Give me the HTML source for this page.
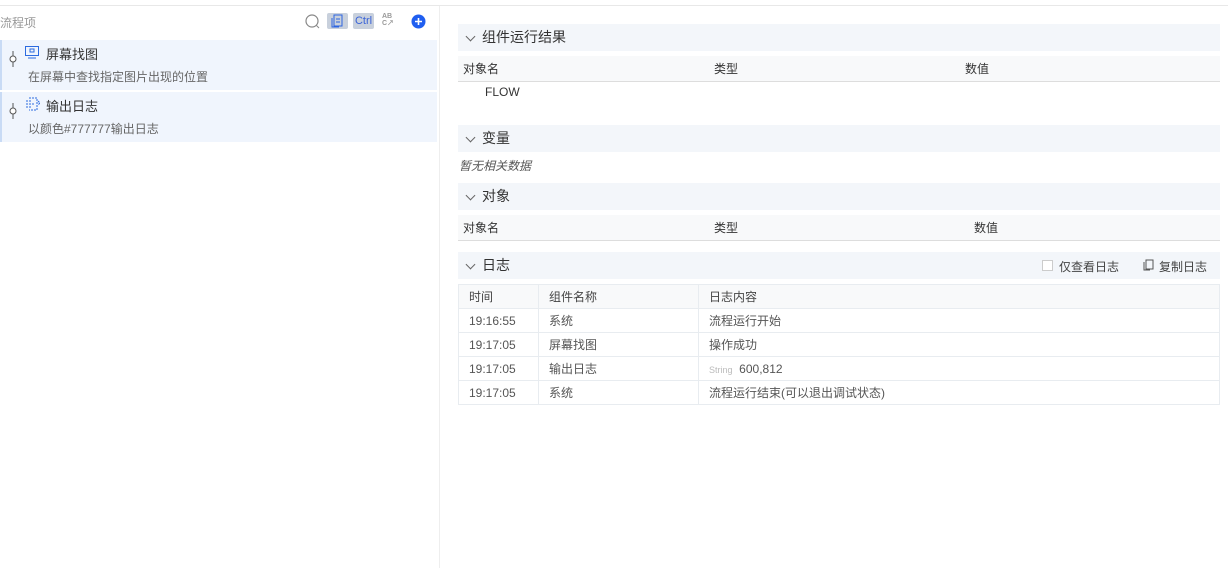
<!DOCTYPE html><html><head><meta charset="utf-8"><style>
*{margin:0;padding:0;box-sizing:border-box}
body{width:1228px;height:568px;background:#fff;font-family:"Liberation Sans","Noto Sans CJK SC",sans-serif;font-size:12px;color:#333;position:relative;overflow:hidden}
.a{position:absolute}
.band{position:absolute;left:458px;width:762px;height:27px;background:#f3f6fa;font-size:14px;color:#333;line-height:27px;padding-left:24px}
.band:before{content:"";position:absolute;left:9px;top:9px;width:6px;height:6px;border-right:1px solid #666;border-bottom:1px solid #666;transform:rotate(45deg)}
.th{position:absolute;left:458px;width:762px;height:26px;background:#f8f9fa;border-bottom:1px solid #ddd;line-height:26px;font-size:12px;color:#333}
.th span{position:absolute}
table{position:absolute;left:458px;top:284px;width:762px;border-collapse:collapse;font-size:12px;color:#555}
td{border:1px solid #e8ecf0;height:24px;padding-left:10px}
tr:first-child td{background:#f8f9fa;color:#444}
.item{position:absolute;left:0;width:437px;height:50px;background:#f0f5fd;border-left:2px solid #c9dbf5}
</style></head><body>
<div class="a" style="left:0;top:5px;width:1228px;height:1px;background:#e8e8e8"></div>
<div class="a" style="left:439px;top:6px;width:1px;height:562px;background:#eee"></div>
<div class="a" style="left:0;top:14px;color:#999;font-size:12px">流程项</div>
<svg class="a" style="left:305px;top:14px" width="15" height="15"><circle cx="7" cy="7" r="6" fill="none" stroke="#888" stroke-width="1.2"/><line x1="11" y1="11" x2="14" y2="14" stroke="#888"/></svg>
<div class="a" style="left:327px;top:13px;width:21px;height:16px;background:#c8d0dc;border-radius:2px"></div>
<svg class="a" style="left:331px;top:14px" width="13" height="14"><rect x="3" y="1" width="8" height="11" fill="none" stroke="#2c64e0"/><path d="M1 4v9h7M5 5h4M5 8h4" fill="none" stroke="#2c64e0"/></svg>
<div class="a" style="left:353px;top:13px;width:21px;height:16px;background:#c8d0dc;border-radius:2px;color:#3a63d8;font-size:11px;line-height:16px;text-align:center">Ctrl</div>
<div class="a" style="left:382px;top:13px;font-size:7px;color:#999;line-height:7px;font-weight:bold">AB<br>C↗</div>
<svg class="a" style="left:411px;top:14px" width="15" height="15"><circle cx="7.5" cy="7.5" r="7" fill="#1f5ef0"/><path d="M7.5 4v7M4 7.5h7" stroke="#fff" stroke-width="1.6"/></svg>
<div class="item" style="top:40px"></div>
<div class="item" style="top:92px"></div>
<svg class="a" style="left:8px;top:51px" width="10" height="16"><line x1="5" y1="0" x2="5" y2="16" stroke="#555"/><circle cx="5" cy="8" r="3" fill="#fff" stroke="#555"/></svg>
<svg class="a" style="left:8px;top:103px" width="10" height="16"><line x1="5" y1="0" x2="5" y2="16" stroke="#555"/><circle cx="5" cy="8" r="3" fill="#fff" stroke="#555"/></svg>
<svg class="a" style="left:25px;top:46px" width="14" height="13"><rect x="0.5" y="0.5" width="13" height="9" fill="none" stroke="#2c6be0"/><rect x="5" y="3" width="4" height="3" fill="none" stroke="#2c6be0"/><line x1="3" y1="12" x2="11" y2="12" stroke="#2c6be0"/></svg>
<div class="a" style="left:46px;top:44px;font-size:13px;color:#333">屏幕找图</div>
<div class="a" style="left:28px;top:68px;color:#666">在屏幕中查找指定图片出现的位置</div>
<svg class="a" style="left:25px;top:97px" width="15" height="14"><path d="M4 1h8v12H4M1 4h5M1 7h8M1 10h5M13 4l2 2-2 2" fill="none" stroke="#2c6be0" stroke-dasharray="2 1"/></svg>
<div class="a" style="left:46px;top:96px;font-size:13px;color:#333">输出日志</div>
<div class="a" style="left:28px;top:120px;color:#666">以颜色#777777输出日志</div>

<div class="band" style="top:24px">组件运行结果</div>
<div class="th" style="top:56px"><span style="left:5px">对象名</span><span style="left:256px">类型</span><span style="left:507px">数值</span></div>
<div class="a" style="left:485px;top:85px;color:#333">FLOW</div>
<div class="band" style="top:125px">变量</div>
<div class="a" style="left:459px;top:157px;color:#555;font-style:italic">暂无相关数据</div>
<div class="band" style="top:183px">对象</div>
<div class="th" style="top:215px"><span style="left:5px">对象名</span><span style="left:256px">类型</span><span style="left:516px">数值</span></div>
<div class="band" style="top:252px">日志</div>
<div class="a" style="left:1042px;top:260px;width:11px;height:11px;border:1px solid #ccc;background:#fff"></div>
<div class="a" style="left:1059px;top:258px;color:#444">仅查看日志</div>
<svg class="a" style="left:1143px;top:259px" width="11" height="12"><rect x="3" y="1" width="7" height="9" fill="none" stroke="#555"/><path d="M1 3v8h6" fill="none" stroke="#555"/></svg>
<div class="a" style="left:1159px;top:258px;color:#444">复制日志</div>
<table>
<tr><td style="width:80px">时间</td><td style="width:160px">组件名称</td><td>日志内容</td></tr>
<tr><td>19:16:55</td><td>系统</td><td>流程运行开始</td></tr>
<tr><td>19:17:05</td><td>屏幕找图</td><td>操作成功</td></tr>
<tr><td>19:17:05</td><td>输出日志</td><td><span style="color:#bbb;font-size:9px">String</span>&nbsp; 600,812</td></tr>
<tr><td>19:17:05</td><td>系统</td><td>流程运行结束(可以退出调试状态)</td></tr>
</table>
</body></html>
